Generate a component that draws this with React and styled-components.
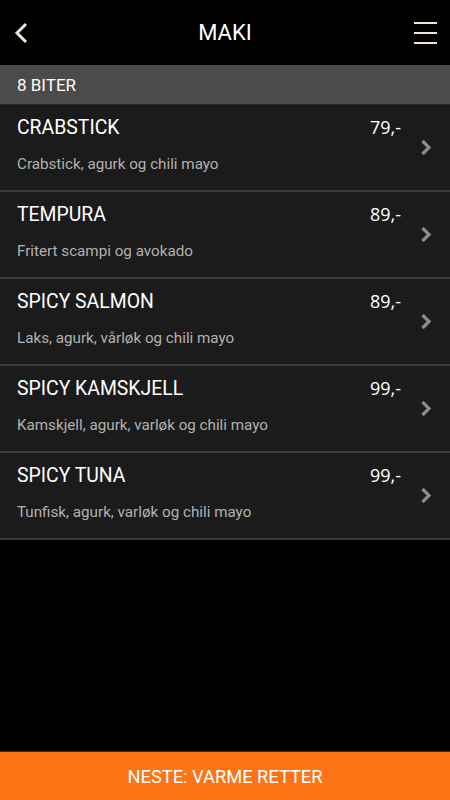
import styled, { createGlobalStyle } from 'styled-components';

const items = [
  { name: 'CRABSTICK', price: '79,-', desc: 'Crabstick, agurk og chili mayo' },
  { name: 'TEMPURA', price: '89,-', desc: 'Fritert scampi og avokado' },
  { name: 'SPICY SALMON', price: '89,-', desc: 'Laks, agurk, vårløk og chili mayo' },
  { name: 'SPICY KAMSKJELL', price: '99,-', desc: 'Kamskjell, agurk, varløk og chili mayo' },
  { name: 'SPICY TUNA', price: '99,-', desc: 'Tunfisk, agurk, varløk og chili mayo' },
];

const App = () => {
  const renderHeader = () => (
    <Header>
      <IconButton aria-label="Tilbake" $align="start">
        <svg width="16" height="22" viewBox="0 0 16 22">
          <path d="M13 2 L4 11 L13 20" fill="none" stroke="#efe3d2" strokeWidth="3" />
        </svg>
      </IconButton>
      <Title>MAKI</Title>
      <IconButton aria-label="Meny" $align="end">
        <Burger>
          <span />
          <span />
          <span />
        </Burger>
      </IconButton>
    </Header>
  );

  const renderItem = (item) => (
    <Row key={item.name}>
      <RowText>
        <RowTop>
          <Name>{item.name}</Name>
          <Price>{item.price}</Price>
        </RowTop>
        <Desc>{item.desc}</Desc>
      </RowText>
      <Chevron>
        <svg width="12" height="17" viewBox="0 0 12 17">
          <path d="M2.5 2 L9 8.5 L2.5 15" fill="none" stroke="#8c8c8c" strokeWidth="3.2" />
        </svg>
      </Chevron>
    </Row>
  );

  return (
    <>
      <GlobalStyle />
      <Screen>
        {renderHeader()}
        <Section>8 BITER</Section>
        <List>{items.map(renderItem)}</List>
        <Spacer />
        <NextButton>NESTE: VARME RETTER</NextButton>
      </Screen>
    </>
  );
};

const GlobalStyle = createGlobalStyle`
  html, body {
    margin: 0;
    padding: 0;
    background: #000;
  }

  body {
    font-family: Roboto, "Noto Sans", sans-serif;
  }
`;

const Screen = styled.div`
  background: #000;
  display: flex;
  flex-direction: column;
  height: 800px;
  width: 450px;
`;

const Header = styled.header`
  align-items: center;
  box-sizing: border-box;
  display: grid;
  grid-template-columns: 1fr auto 1fr;
  height: 65px;
  padding: 0 13px 0 13px;
`;

const IconButton = styled.div`
  align-items: center;
  display: flex;
  height: 40px;
  justify-content: ${({ $align }) => ($align === 'end' ? 'flex-end' : 'flex-start')};
`;

const Burger = styled.div`
  display: flex;
  flex-direction: column;
  gap: 8px;
  width: 23px;

  > span {
    background: #efe3d2;
    display: block;
    height: 2px;
  }
`;

const Title = styled.h1`
  color: #fff;
  font-size: 22px;
  font-weight: 400;
  margin: 0;
`;

const Section = styled.div`
  align-items: center;
  background: #4b4b4b;
  border-bottom: 1px solid #2a2a2a;
  box-sizing: border-box;
  color: #fff;
  display: flex;
  font-size: 17px;
  height: 40px;
  padding-left: 17px;
`;

const List = styled.div`
  display: flex;
  flex-direction: column;
`;

const Row = styled.div`
  align-items: center;
  background: #1b1b1b;
  border-bottom: 2px solid #3a3a3a;
  box-sizing: border-box;
  display: flex;
  height: 87px;
  padding: 0 18px 0 17px;
`;

const RowText = styled.div`
  display: flex;
  flex: 1;
  flex-direction: column;
  gap: 16px;
  margin-top: -8px;
`;

const RowTop = styled.div`
  align-items: baseline;
  display: flex;
  justify-content: space-between;
  padding-right: 19px;
`;

const Name = styled.span`
  color: #fff;
  font-size: 19.4px;
`;

const Price = styled.span`
  color: #fff;
  font-family: "Open Sans", "Noto Sans", sans-serif;
  font-size: 18px;
`;

const Desc = styled.span`
  color: #b2b2b2;
  font-size: 15.2px;
`;

const Chevron = styled.div`
  display: flex;
`;

const Spacer = styled.div`
  flex: 1;
`;

const NextButton = styled.div`
  align-items: center;
  background: #fb7416;
  border-top: 1px solid #1f3f3f;
  box-sizing: border-box;
  color: #fff;
  display: flex;
  font-size: 18.3px;
  height: 49px;
  justify-content: center;
`;

export default App;
